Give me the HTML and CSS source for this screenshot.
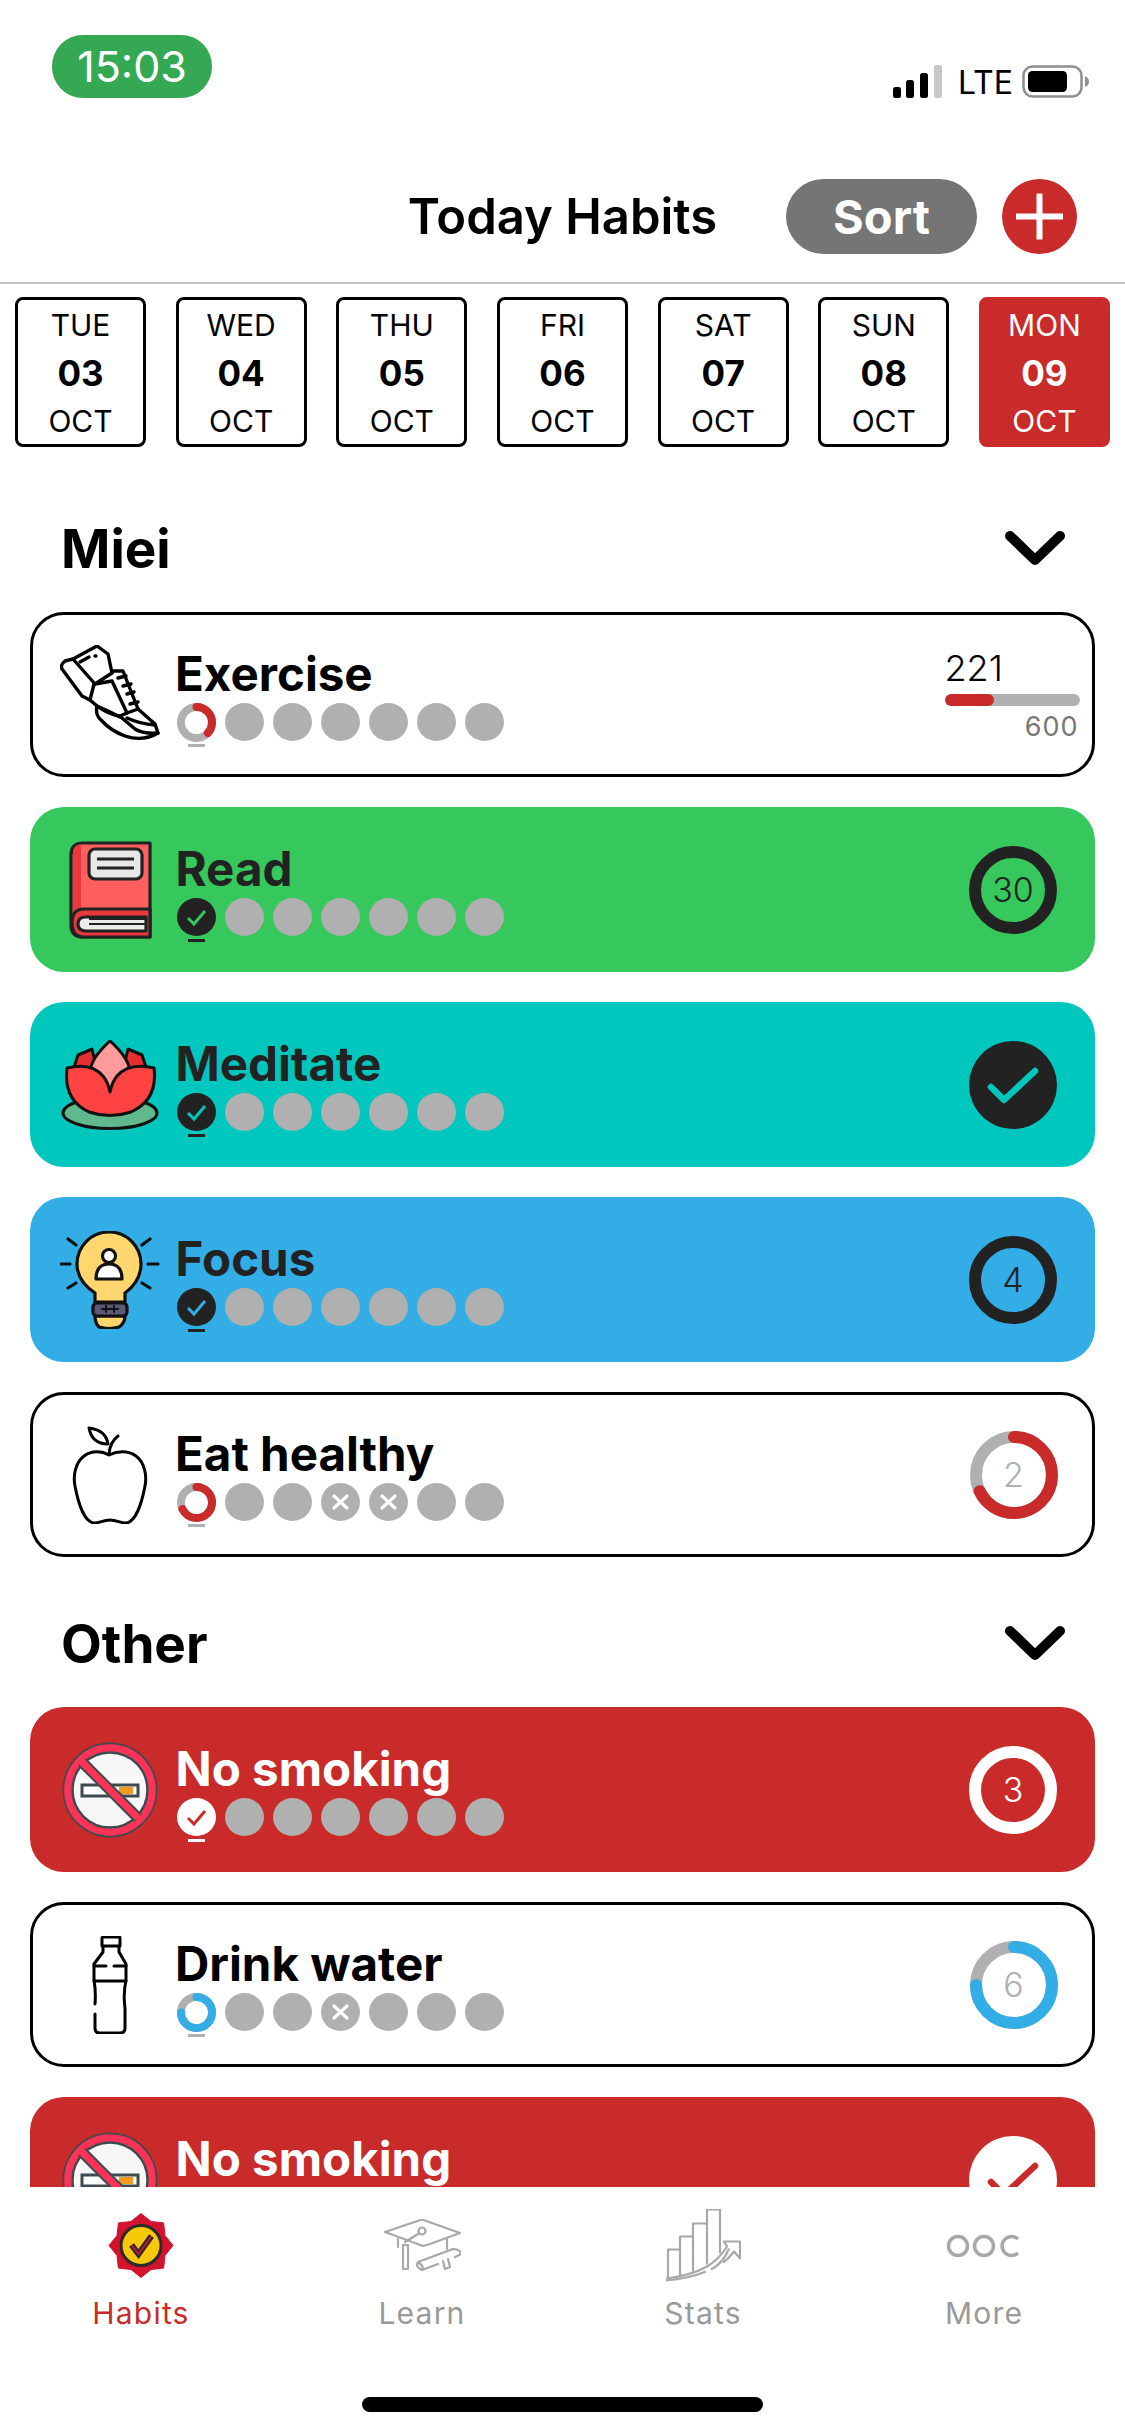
FILE: index.html
```html
<!DOCTYPE html>
<html lang="en">
  <head>
    <meta charset="UTF-8" />
    <title>Today Habits</title>
    <link rel="stylesheet" href="styles.css">
  </head>
  <body>
    <svg class="defs" width="0" height="0">
      <symbol id="noSmoking" viewBox="0 0 98 98">
        <circle cx="49" cy="49" r="47.5" fill="#3f4a4e"/>
        <circle cx="49" cy="49" r="42" fill="#f7f7f7" stroke="#ff3358" stroke-width="7.5"/>
        <circle cx="49" cy="49" r="37.5" fill="none" stroke="#3f4a4e" stroke-width="2.5"/>
        <rect x="21" y="44" width="56" height="11" fill="#fff" stroke="#3f4a4e" stroke-width="3"/>
        <rect x="58" y="46" width="14" height="7" fill="#f59a1c"/>
        <path d="M21 21 L77 77" stroke="#3f4a4e" stroke-width="11"/>
        <path d="M20 20 L78 78" stroke="#ff3358" stroke-width="7"/>
      </symbol>
    </svg>

    <div class="page">
      <div class="status">
        <div class="time">15:03</div>
        <div class="status-right">
          <svg class="signal" width="50" height="33" viewBox="0 0 50 33">
            <rect x="0" y="22" width="8" height="11" rx="2.5" fill="#000"/>
            <rect x="13" y="15" width="8" height="18" rx="2.5" fill="#000"/>
            <rect x="27" y="8" width="8" height="25" rx="2.5" fill="#000"/>
            <rect x="41" y="0" width="8" height="33" rx="2.5" fill="#c8c8c8"/>
          </svg>
          <span class="lte">LTE</span>
          <svg class="battery" width="68" height="33" viewBox="0 0 68 33">
            <rect x="1.5" y="1.5" width="58" height="30" rx="9" fill="#fff" stroke="#8e8e8e" stroke-width="2.5"/>
            <rect x="6" y="6" width="39" height="21" rx="4.5" fill="#000"/>
            <path d="M63 11 Q67 13 67 16.5 Q67 20 63 22 Z" fill="#8e8e8e"/>
          </svg>
        </div>
      </div>

      <header class="topbar">
        <div></div>
        <h1>Today Habits</h1>
        <div class="actions">
          <div class="sort">Sort</div>
          <div class="add">
            <svg width="75" height="75" viewBox="0 0 75 75">
              <path d="M37.5 14.5 V60.5 M14 37.5 H61" stroke="#fff" stroke-width="6" fill="none"/>
            </svg>
          </div>
        </div>
      </header>

      <div class="days">
        <div class="day"><span>TUE</span><b>03</b><span>OCT</span></div>
        <div class="day"><span>WED</span><b>04</b><span>OCT</span></div>
        <div class="day"><span>THU</span><b>05</b><span>OCT</span></div>
        <div class="day"><span>FRI</span><b>06</b><span>OCT</span></div>
        <div class="day"><span>SAT</span><b>07</b><span>OCT</span></div>
        <div class="day"><span>SUN</span><b>08</b><span>OCT</span></div>
        <div class="day today"><span>MON</span><b>09</b><span>OCT</span></div>
      </div>

      <main class="list">
        <section class="group first">
          <div class="group-head">
            <h2>Miei</h2>
            <svg class="chevron" width="60" height="36" viewBox="0 0 60 36"><path d="M5 5 L30 29 L55 5" fill="none" stroke="#000" stroke-width="10" stroke-linecap="round" stroke-linejoin="round"/></svg>
          </div>

          <div class="card outline">
            <div class="icon">
              <svg width="100" height="100" viewBox="5 4 100 100" fill="none" stroke="#000" stroke-width="3.4" stroke-linejoin="round" stroke-linecap="round">
                <path d="M18 18 L42 5 L53 13 L57 32 L40 43 Z"/>
                <path d="M18 18 L10 20 Q5 24 7 28 L27 55 L35 59 L39 43"/>
                <path d="M25 21 L34 16 M40 15 L41 15"/>
                <path d="M40 43 L57 40 M57 32 L58 30 L68 30 L83 68 L72 72 L57 40"/>
                <path d="M63 37 L71 35 M68 45 L76 43 M72 53 L79 51 M75 63 L83 61"/>
                <path d="M35 59 L42 65 Q54 74 65 75 L72 72 M83 68 L100 83 L103 92"/>
                <path d="M42 65 Q40 74 46 79 Q56 90 70 95 Q88 101 103 92 Q88 93 80 88 L67 77 Q54 70 42 65 Z"/>
                <path d="M72 77 Q85 83 100 84"/>
              </svg>
            </div>
            <div class="body">
              <div class="name">Exercise</div>
              <div class="dots">
                <div class="dot ring">
                  <svg width="39" height="39" viewBox="0 0 39 39"><circle cx="19.5" cy="19.5" r="15.5" fill="#fff" stroke="#b0b0b0" stroke-width="8"/><circle cx="19.5" cy="19.5" r="15.5" fill="none" stroke="#c92a2a" stroke-width="8" stroke-linecap="round" pathLength="100" stroke-dasharray="37 100" transform="rotate(-90 19.5 19.5)"/></svg>
                </div>
                <div class="dot"></div><div class="dot"></div><div class="dot"></div><div class="dot"></div><div class="dot"></div><div class="dot"></div>
              </div>
            </div>
            <div class="goal">
              <div class="goal-now">221</div>
              <div class="goal-bar"><div class="goal-fill" style="width: 37%"></div></div>
              <div class="goal-max">600</div>
            </div>
          </div>

          <div class="card green">
            <div class="icon">
              <svg width="83" height="98" viewBox="0 0 83 98" stroke="#222" stroke-width="3.2" stroke-linejoin="round">
                <path d="M14 2 H81 V96 H14 Q2 96 2 84 V14 Q2 2 14 2 Z" fill="#ff5f5f"/>
                <path d="M4 12 Q4 4 12 3 V68 Q7 69 4 74 Z" fill="#e8393f" stroke="none"/>
                <rect x="20" y="8" width="53" height="30" rx="6" fill="#e8e8e8"/>
                <path d="M28 18 H65 M28 27 H65" fill="none"/>
                <path d="M81 68 H15 Q3 68 3 82 Q3 96 15 96 H81 Z" fill="#e8393f"/>
                <path d="M77 76 H17 Q9 76 9 83 Q9 90 17 90 H77 Z" fill="#ececec"/>
                <path d="M20 83 H76 M20 78 H76" fill="none" stroke-width="2"/>
              </svg>
            </div>
            <div class="body">
              <div class="name">Read</div>
              <div class="dots">
                <div class="dot done">
                  <svg width="39" height="38" viewBox="0 0 39 38"><path d="M11 20 L17 26 L28 13" fill="none" stroke="#36c85c" stroke-width="3"/></svg>
                </div>
                <div class="dot"></div><div class="dot"></div><div class="dot"></div><div class="dot"></div><div class="dot"></div><div class="dot"></div>
              </div>
            </div>
            <div class="progress">
              <svg width="88" height="88" viewBox="0 0 88 88"><circle cx="44" cy="44" r="38" fill="none" stroke="#222" stroke-width="12"/></svg>
              <span>30</span>
            </div>
          </div>

          <div class="card teal">
            <div class="icon">
              <svg width="98" height="90" viewBox="0 0 98 90" stroke="#111" stroke-width="3" stroke-linejoin="round">
                <ellipse cx="49" cy="73" rx="47" ry="15.5" fill="#5fb98c"/>
                <path d="M17 15 L31 9 L36 30 L12 30 Z" fill="#e5302f"/>
                <path d="M81 15 L67 9 L62 30 L86 30 Z" fill="#e5302f"/>
                <path d="M49 1 Q68 18 69 32 Q66 44 49 52 Q32 44 29 32 Q30 18 49 1 Z" fill="#ff9b9b"/>
                <path d="M6 28 Q30 22 42 36 Q47 42 49 52 Q51 42 56 36 Q68 22 93 28 Q97 60 70 72 Q49 79 28 72 Q2 60 6 28 Z" fill="#ff4242"/>
              </svg>
            </div>
            <div class="body">
              <div class="name">Meditate</div>
              <div class="dots">
                <div class="dot done">
                  <svg width="39" height="38" viewBox="0 0 39 38"><path d="M11 20 L17 26 L28 13" fill="none" stroke="#00c7be" stroke-width="3"/></svg>
                </div>
                <div class="dot"></div><div class="dot"></div><div class="dot"></div><div class="dot"></div><div class="dot"></div><div class="dot"></div>
              </div>
            </div>
            <div class="progress check">
              <svg width="88" height="88" viewBox="0 0 88 88"><path d="M22 46 L35 59 L66 30" fill="none" stroke="#00c7be" stroke-width="6.5" stroke-linecap="round" stroke-linejoin="round"/></svg>
            </div>
          </div>

          <div class="card blue">
            <div class="icon">
              <svg width="100" height="98" viewBox="0 0 100 98" stroke="#111" stroke-width="3.2" stroke-linejoin="round" stroke-linecap="round">
                <path d="M35 71 V62 Q17 50 17 33 A32 32 0 0 1 81 33 Q81 50 65 62 V71 Z" fill="#ffd76e"/>
                <path d="M39 96 Q35 92 35 85 H65 Q65 92 59 96 Q49 99 39 96 Z" fill="#ffd76e"/>
                <rect x="33" y="72" width="34" height="13" rx="4" fill="#5b5878"/>
                <path d="M42 78 H58 M46 75 V81 M54 75 V81" fill="none" stroke-width="2"/>
                <circle cx="49" cy="25" r="6.5" fill="#fff"/>
                <path d="M36 48 Q36 33 49 33 Q62 33 62 48 Z" fill="#fff"/>
                <path d="M1 33 H10 M88 33 H98 M8 8 L16 14 M90 8 L82 14 M8 57 L16 52 M90 57 L82 52" fill="none"/>
              </svg>
            </div>
            <div class="body">
              <div class="name">Focus</div>
              <div class="dots">
                <div class="dot done">
                  <svg width="39" height="38" viewBox="0 0 39 38"><path d="M11 20 L17 26 L28 13" fill="none" stroke="#32ade6" stroke-width="3"/></svg>
                </div>
                <div class="dot"></div><div class="dot"></div><div class="dot"></div><div class="dot"></div><div class="dot"></div><div class="dot"></div>
              </div>
            </div>
            <div class="progress">
              <svg width="88" height="88" viewBox="0 0 88 88"><circle cx="44" cy="44" r="38" fill="none" stroke="#222" stroke-width="12"/></svg>
              <span>4</span>
            </div>
          </div>

          <div class="card outline">
            <div class="icon">
              <svg width="76" height="98" viewBox="0 0 76 98" fill="none" stroke="#000" stroke-width="3" stroke-linejoin="round" stroke-linecap="round">
                <path d="M37 29 C30 25 20 24 12 30 C3 37 1 50 3 60 C6 76 12 96 22 97 C28 97 31 94 38 94 C45 94 48 97 54 97 C64 96 70 76 73 60 C75 50 73 37 64 30 C56 24 45 25 37 29 Z"/>
                <path d="M37 28 Q38 16 46 10"/>
                <path d="M17 2 Q34 4 36 18 Q20 18 17 2 Z"/>
              </svg>
            </div>
            <div class="body">
              <div class="name">Eat healthy</div>
              <div class="dots">
                <div class="dot ring">
                  <svg width="39" height="39" viewBox="0 0 39 39"><circle cx="19.5" cy="19.5" r="15.5" fill="#fff" stroke="#b0b0b0" stroke-width="8"/><circle cx="19.5" cy="19.5" r="15.5" fill="none" stroke="#c92a2a" stroke-width="8" stroke-linecap="round" pathLength="100" stroke-dasharray="68 100" transform="rotate(-90 19.5 19.5)"/></svg>
                </div>
                <div class="dot"></div><div class="dot"></div>
                <div class="dot">
                  <svg width="39" height="38" viewBox="0 0 39 38"><path d="M13 13 L26 25 M26 13 L13 25" stroke="#fff" stroke-width="3.2" stroke-linecap="round"/></svg>
                </div>
                <div class="dot">
                  <svg width="39" height="38" viewBox="0 0 39 38"><path d="M13 13 L26 25 M26 13 L13 25" stroke="#fff" stroke-width="3.2" stroke-linecap="round"/></svg>
                </div>
                <div class="dot"></div><div class="dot"></div>
              </div>
            </div>
            <div class="progress part">
              <svg width="88" height="88" viewBox="0 0 88 88"><circle cx="44" cy="44" r="38" fill="none" stroke="#b0b0b0" stroke-width="12"/><circle cx="44" cy="44" r="38" fill="none" stroke="#c92a2a" stroke-width="12" stroke-linecap="round" pathLength="100" stroke-dasharray="68 100" transform="rotate(-90 44 44)"/></svg>
              <span>2</span>
            </div>
          </div>
        </section>

        <section class="group">
          <div class="group-head">
            <h2>Other</h2>
            <svg class="chevron" width="60" height="36" viewBox="0 0 60 36"><path d="M5 5 L30 29 L55 5" fill="none" stroke="#000" stroke-width="10" stroke-linecap="round" stroke-linejoin="round"/></svg>
          </div>

          <div class="card red">
            <div class="icon">
              <svg width="98" height="98"><use href="#noSmoking"/></svg>
            </div>
            <div class="body">
              <div class="name">No smoking</div>
              <div class="dots">
                <div class="dot done">
                  <svg width="39" height="38" viewBox="0 0 39 38"><path d="M11 20 L17 26 L28 13" fill="none" stroke="#c92a2a" stroke-width="3"/></svg>
                </div>
                <div class="dot"></div><div class="dot"></div><div class="dot"></div><div class="dot"></div><div class="dot"></div><div class="dot"></div>
              </div>
            </div>
            <div class="progress">
              <svg width="88" height="88" viewBox="0 0 88 88"><circle cx="44" cy="44" r="38" fill="none" stroke="#fff" stroke-width="12"/></svg>
              <span>3</span>
            </div>
          </div>

          <div class="card outline">
            <div class="icon">
              <svg width="36" height="98" viewBox="0 0 36 98" fill="none" stroke="#000" stroke-width="3" stroke-linejoin="round" stroke-linecap="round">
                <path d="M10 10 V2 Q10 1 12 1 H27 Q28 1 28 2 V10 Z"/>
                <path d="M11 10 V16 L2 28 V44 Q4 56 3 68 M3 78 V92 Q3 97 8 97 H28 Q33 97 33 92 V72 Q31 58 34 44 V28 L27 16 V10"/>
                <path d="M2 30 H14 M22 30 H34 M2 45 H34"/>
              </svg>
            </div>
            <div class="body">
              <div class="name">Drink water</div>
              <div class="dots">
                <div class="dot ring">
                  <svg width="39" height="39" viewBox="0 0 39 39"><circle cx="19.5" cy="19.5" r="15.5" fill="#fff" stroke="#b0b0b0" stroke-width="8"/><circle cx="19.5" cy="19.5" r="15.5" fill="none" stroke="#32ade6" stroke-width="8" stroke-linecap="round" pathLength="100" stroke-dasharray="75 100" transform="rotate(-90 19.5 19.5)"/></svg>
                </div>
                <div class="dot"></div><div class="dot"></div>
                <div class="dot">
                  <svg width="39" height="38" viewBox="0 0 39 38"><path d="M13 13 L26 25 M26 13 L13 25" stroke="#fff" stroke-width="3.2" stroke-linecap="round"/></svg>
                </div>
                <div class="dot"></div><div class="dot"></div><div class="dot"></div>
              </div>
            </div>
            <div class="progress part">
              <svg width="88" height="88" viewBox="0 0 88 88"><circle cx="44" cy="44" r="38" fill="none" stroke="#b0b0b0" stroke-width="12"/><circle cx="44" cy="44" r="38" fill="none" stroke="#32ade6" stroke-width="12" stroke-linecap="round" pathLength="100" stroke-dasharray="75 100" transform="rotate(-90 44 44)"/></svg>
              <span>6</span>
            </div>
          </div>

          <div class="card red">
            <div class="icon">
              <svg width="98" height="98"><use href="#noSmoking"/></svg>
            </div>
            <div class="body">
              <div class="name">No smoking</div>
              <div class="dots">
                <div class="dot done"></div>
                <div class="dot"></div><div class="dot"></div><div class="dot"></div><div class="dot"></div><div class="dot"></div><div class="dot"></div>
              </div>
            </div>
            <div class="progress check">
              <svg width="88" height="88" viewBox="0 0 88 88"><path d="M22 46 L35 59 L66 30" fill="none" stroke="#c92a2a" stroke-width="6.5" stroke-linecap="round" stroke-linejoin="round"/></svg>
            </div>
          </div>
        </section>
      </main>

      <nav class="tabs">
        <div class="tab active">
          <div class="tab-icon">
            <svg width="66" height="65" viewBox="0 0 65 65">
              <polygon points="32.5,0.5 42.5,8.5 55.1,9.9 56.5,22.5 64.5,32.5 56.5,42.5 55.1,55.1 42.5,56.5 32.5,64.5 22.5,56.5 9.9,55.1 8.5,42.5 0.5,32.5 8.5,22.5 9.9,9.9 22.5,8.5" fill="#d3122d" stroke="#d3122d" stroke-width="1" stroke-linejoin="round"/>
              <circle cx="32.5" cy="32.5" r="20" fill="#f8c80a" stroke="#2a2a2a" stroke-width="3"/>
              <path d="M23 32 L30 41 L43 23" fill="none" stroke="#2a2a2a" stroke-width="6"/>
              <path d="M23 32 L30 41 L43 23" fill="none" stroke="#c2143a" stroke-width="2"/>
            </svg>
          </div>
          <span>Habits</span>
        </div>
        <div class="tab">
          <div class="tab-icon">
            <svg width="77" height="53" viewBox="14 12 77 53" fill="none" stroke="#a8a8a8" stroke-width="2.2" stroke-linejoin="round" stroke-linecap="round">
              <path d="M52 12.5 L90 26 L60 37 L53 39 L15 25 Z"/>
              <circle cx="52" cy="24" r="3.5"/>
              <path d="M48 27 L35 35"/>
              <path d="M33 38 H38 V62 H33 Z"/>
              <path d="M28 32 V40 M77 32 V42"/>
              <path d="M48 55 L83 42 Q90 42 91 47 L85 50 M48 55 Q45 60 52 63 L68 57"/>
              <path d="M52 63 Q55 60 48 55 M73 54 L75 62 L80 60 L78 52"/>
            </svg>
          </div>
          <span>Learn</span>
        </div>
        <div class="tab">
          <div class="tab-icon">
            <svg width="76" height="74" viewBox="24 12.5 76 74" fill="none" stroke="#a8a8a8" stroke-width="2.2" stroke-linejoin="round">
              <path d="M27 83 V53 H39 V80 M39 53 V40 H52 V75 M52 40 V27 H66 V68 M66 27 V13 H79 V57"/>
              <path d="M25 84 Q48 82 65 75 M70 73 Q82 67 88 52"/>
              <path d="M25 82 Q50 79 66 70 Q78 63 86 50 L83 45 H99 V62 L93 55 Q88 62 82 66"/>
            </svg>
          </div>
          <span>Stats</span>
        </div>
        <div class="tab">
          <div class="tab-icon">
            <svg width="76" height="24" viewBox="0 0 76 24" fill="none" stroke="#a8a8a8" stroke-width="3.5">
              <circle cx="12" cy="12" r="9.5"/>
              <circle cx="38" cy="12" r="9.5"/>
              <path d="M72 5 A9.5 9.5 0 1 0 72 19"/>
            </svg>
          </div>
          <span>More</span>
        </div>
        <div class="home-bar"></div>
      </nav>
    </div>
  </body>
</html>
```

FILE: styles.css
```css
* {
  box-sizing: border-box;
}

body {
  margin: 0;
  background: #fff;
  font-family: Inter, "Noto Sans", sans-serif;
  color: #000;
}

.defs {
  position: absolute;
}

.page {
  width: 1125px;
  height: 2436px;
  display: flex;
  flex-direction: column;
  overflow: hidden;
}

/* status bar */
.status {
  height: 179px;
  flex: none;
  padding: 35px 35px 0 52px;
  display: flex;
  justify-content: space-between;
  align-items: flex-start;
}

.time {
  width: 160px;
  height: 63px;
  background: #34a853;
  border-radius: 31px;
  color: #fff;
  font-size: 43px;
  line-height: 63px;
  text-align: center;
}

.status-right {
  margin-top: 30px;
  display: flex;
  align-items: center;
  gap: 15px;
  height: 33px;
}

.lte {
  font-size: 32px;
  line-height: 35px;
  width: 50px;
  padding-top: 2px;
}

.battery {
  margin-left: -1px;
}

/* header */
.topbar {
  flex: none;
  display: grid;
  grid-template-columns: 1fr auto 1fr;
  align-items: center;
  padding-bottom: 28px;
  border-bottom: 2px solid #c4c4c4;
}

.topbar h1 {
  margin: 0;
  font-size: 49px;
  font-weight: 600;
  white-space: nowrap;
}

.actions {
  display: flex;
  justify-content: flex-end;
  gap: 25px;
  padding-right: 48px;
}

.sort {
  width: 191px;
  height: 75px;
  border-radius: 38px;
  background: #757575;
  color: #fff;
  font-size: 47px;
  font-weight: 700;
  line-height: 75px;
  text-align: center;
}

.add {
  width: 75px;
  height: 75px;
  border-radius: 50%;
  background: #c92a2a;
}

.add svg {
  display: block;
}

/* day strip */
.days {
  flex: none;
  display: flex;
  justify-content: space-between;
  padding: 13px 15px 0 15px;
}

.day {
  width: 131px;
  height: 150px;
  border: 3px solid #000;
  border-radius: 8px;
  display: flex;
  flex-direction: column;
  align-items: center;
  padding-top: 1px;
  font-size: 30px;
  line-height: 48px;
}

.day b {
  font-size: 35px;
  font-weight: 700;
}

.day.today {
  background: #c92a2a;
  border-color: #c92a2a;
  color: #fff;
}

/* habit list */
.list {
  flex: 1;
  min-height: 0;
  overflow: hidden;
  padding: 0 30px;
}

.group.first {
  padding-top: 45px;
}

.group-head {
  display: flex;
  justify-content: space-between;
  align-items: center;
  padding: 32px 30px 38px 31px;
}

.group-head h2 {
  margin: 0;
  font-size: 53px;
  font-weight: 700;
  line-height: 50px;
}

.card {
  height: 165px;
  margin-bottom: 30px;
  border-radius: 34px;
  display: flex;
  align-items: center;
  position: relative;
  color: #222;
}

.card.outline {
  border: 3.5px solid #000;
  color: #000;
}

.card.green {
  background: #36c85c;
}

.card.teal {
  background: #00c7be;
}

.card.blue {
  background: #32ade6;
}

.card.red {
  background: #c92a2a;
  color: #fff;
}

.icon {
  width: 100px;
  margin-left: 30px;
  flex: none;
  display: flex;
  justify-content: center;
}

.card.outline .icon {
  margin-left: 26.5px;
}

.icon svg {
  display: block;
}

.body {
  margin-left: 17px;
  flex: 1;
  padding-top: 1px;
}

.name {
  margin-left: -1.5px;
  font-size: 47.5px;
  font-weight: 700;
  line-height: 50px;
  white-space: nowrap;
}

.dots {
  display: flex;
  gap: 9px;
  margin-top: 4px;
}

.dot {
  width: 39px;
  height: 38px;
  border-radius: 50%;
  background: #b0b0b0;
  flex: none;
  position: relative;
}

.dot svg {
  display: block;
}

.dot:first-child::after {
  content: "";
  position: absolute;
  left: 11px;
  bottom: -6px;
  width: 17px;
  height: 3px;
  background: #b0b0b0;
}

.dot.ring {
  background: none;
}

.dot.done {
  background: #222;
}

.dot.done::after {
  background: #222;
}

.card.red .dot.done {
  background: #fff;
}

.card.red .dot.done::after {
  background: #fff;
}

.progress {
  width: 88px;
  height: 88px;
  margin-right: 38px;
  flex: none;
  position: relative;
  display: flex;
  align-items: center;
  justify-content: center;
  font-size: 34px;
  font-weight: 300;
}

.card.outline .progress {
  margin-right: 34.5px;
}

.progress svg {
  position: absolute;
  left: 0;
  top: 0;
}

.progress.part {
  color: #b0b0b0;
}

.progress.check {
  border-radius: 50%;
  background: #222;
}

.card.red .progress.check {
  background: #fff;
}

/* step goal on the exercise card */
.goal {
  width: 135px;
  margin-right: 12.5px;
  flex: none;
}

.goal-now {
  font-size: 36px;
  font-weight: 300;
  line-height: 40px;
}

.goal-bar {
  height: 12px;
  margin-top: 6px;
  border-radius: 6px;
  background: #b0b0b0;
  overflow: hidden;
}

.goal-fill {
  height: 100%;
  border-radius: 6px;
  background: #c92a2a;
}

.goal-max {
  margin-top: 6px;
  padding-right: 1px;
  text-align: right;
  color: #777;
  font-size: 27px;
  line-height: 30px;
  letter-spacing: 1px;
}

/* tab bar */
.tabs {
  height: 249px;
  flex: none;
  background: #fff;
  display: grid;
  grid-template-columns: repeat(4, 281px);
  justify-content: center;
  align-content: flex-start;
  position: relative;
}

.tab {
  display: flex;
  flex-direction: column;
  align-items: center;
  color: #999;
  font-size: 30px;
  letter-spacing: 1.2px;
  line-height: 36px;
}

.tab.active {
  color: #c92a2a;
}

.tab-icon {
  height: 108px;
  padding-top: 9px;
  display: flex;
  align-items: center;
  justify-content: center;
}

.tab-icon svg {
  display: block;
}

.home-bar {
  position: absolute;
  left: 362px;
  top: 210px;
  width: 401px;
  height: 15px;
  border-radius: 8px;
  background: #000;
}
```
